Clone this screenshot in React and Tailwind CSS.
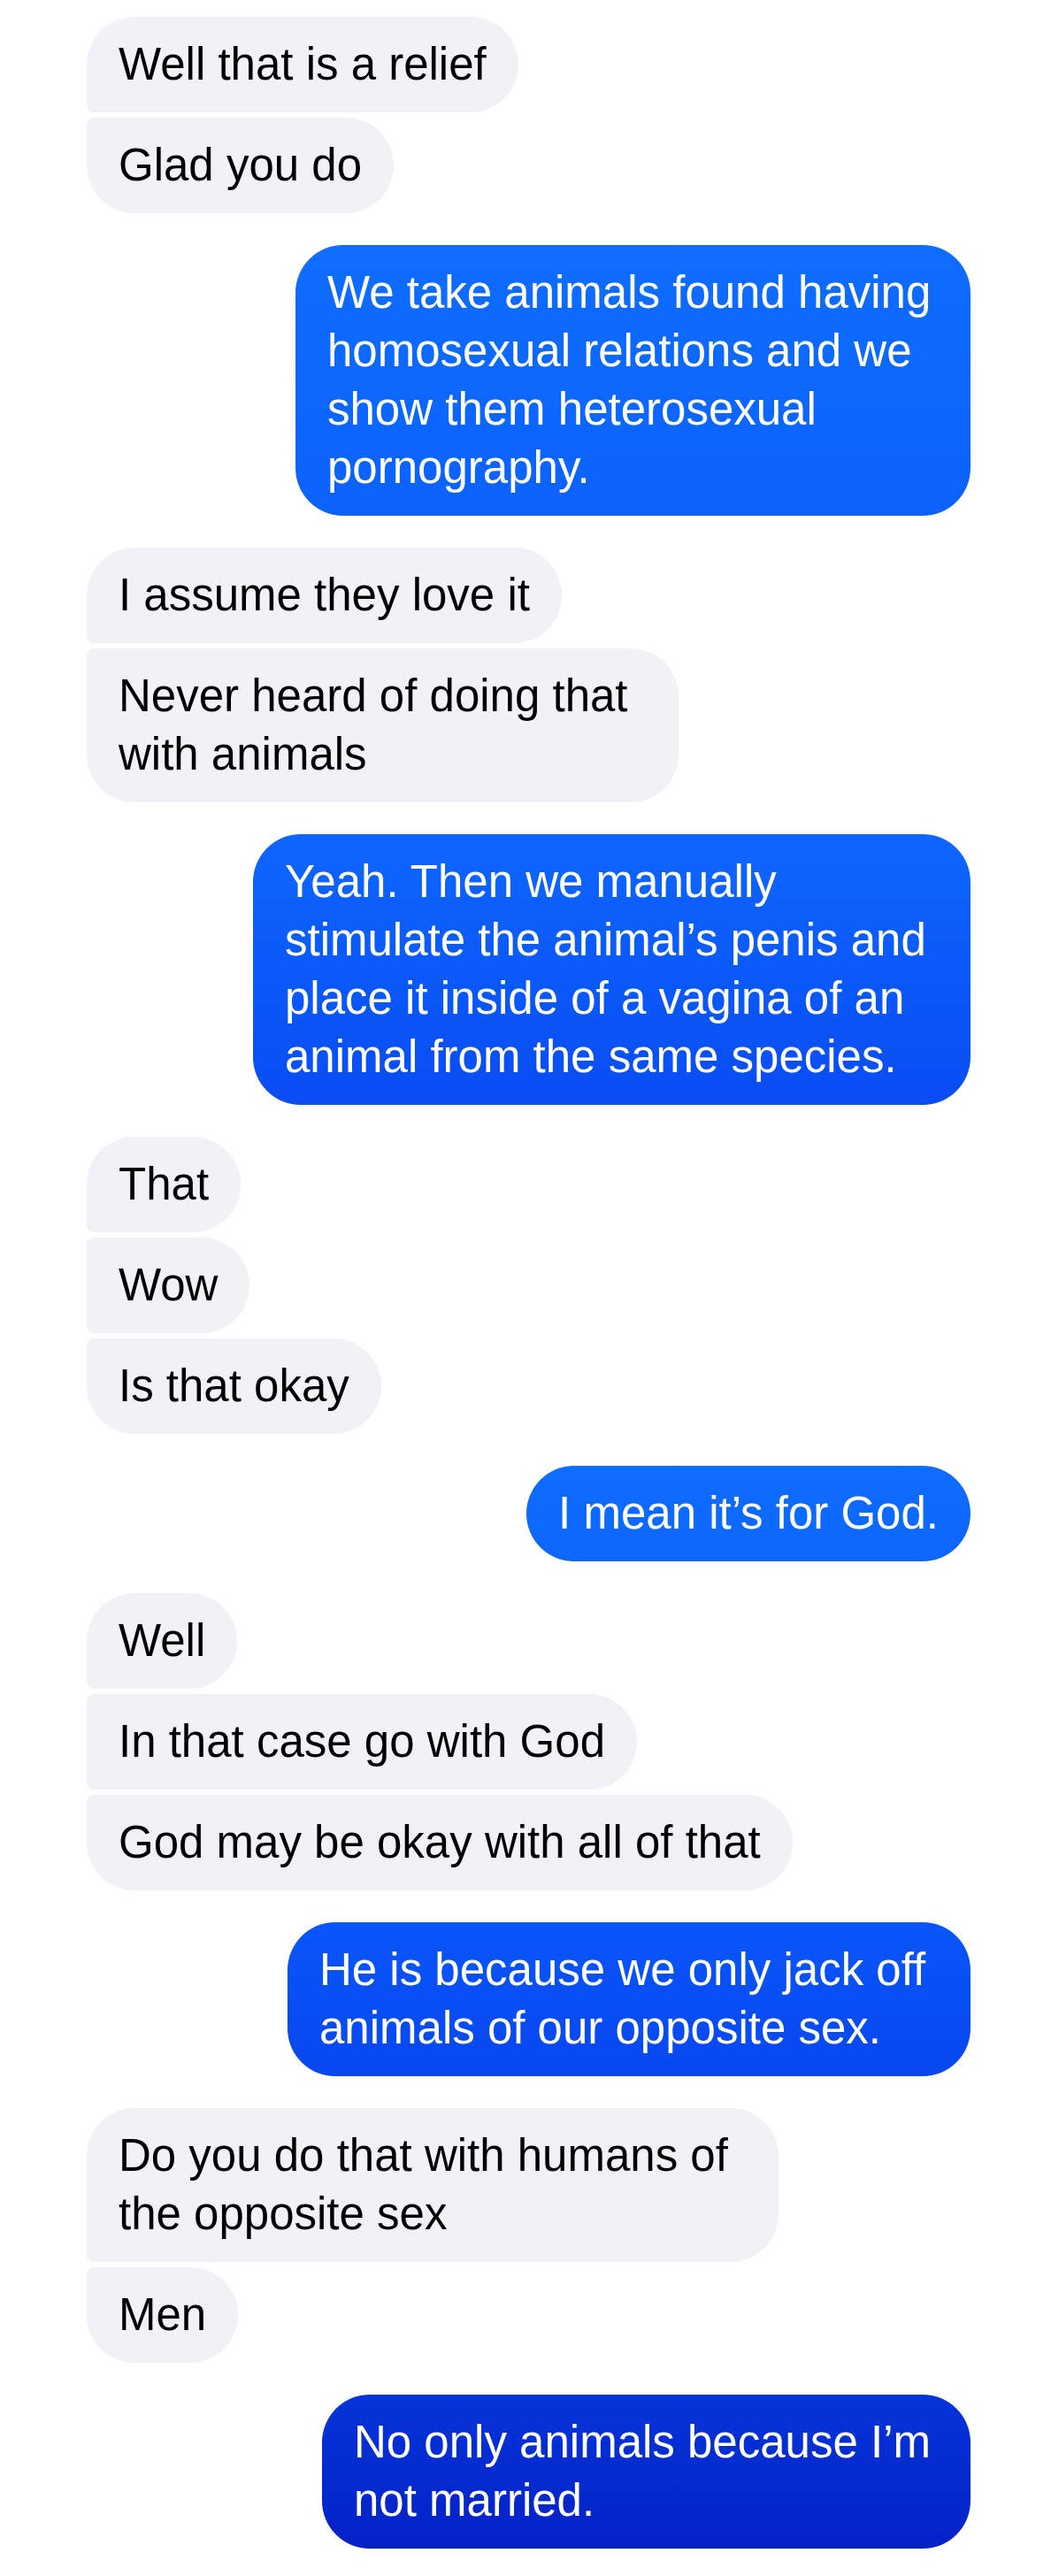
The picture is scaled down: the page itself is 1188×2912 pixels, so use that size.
import React from 'react';

// conversation, top to bottom; each group is a run of bubbles from one side.
// multi-line bubbles keep the wrap width they had in the app, hence the fixed w-[..]
const groups = [
    { side: 'them', items: [{ lines: ['Well that is a relief'] }, { lines: ['Glad you do'] }] },
    {
        side: 'me',
        grad: 'from-[#0f6dff] to-[#0c62fc]',
        items: [{ w: 'w-[763px]', lines: ['We take animals found having', 'homosexual relations and we', 'show them heterosexual', 'pornography.'] }],
    },
    {
        side: 'them',
        items: [{ lines: ['I assume they love it'] }, { w: 'w-[669px]', lines: ['Never heard of doing that', 'with animals'] }],
    },
    {
        side: 'me',
        grad: 'from-[#0f66ff] to-[#0a4cf2]',
        items: [{ w: 'w-[811px]', lines: ['Yeah. Then we manually', 'stimulate the animal\u2019s penis and', 'place it inside of a vagina of an', 'animal from the same species.'] }],
    },
    { side: 'them', items: [{ lines: ['That'] }, { lines: ['Wow'] }, { lines: ['Is that okay'] }] },
    { side: 'me', grad: 'from-[#0f6dff] to-[#0d66fd]', items: [{ lines: ['I mean it\u2019s for God.'] }] },
    {
        side: 'them',
        items: [{ lines: ['Well'] }, { lines: ['In that case go with God'] }, { lines: ['God may be okay with all of that'] }],
    },
    {
        side: 'me',
        grad: 'from-[#0a56f8] to-[#0847ee]',
        items: [{ w: 'w-[772px]', lines: ['He is because we only jack off', 'animals of our opposite sex.'] }],
    },
    {
        side: 'them',
        items: [{ w: 'w-[782px]', lines: ['Do you do that with humans of', 'the opposite sex'] }, { lines: ['Men'] }],
    },
    {
        side: 'me',
        grad: 'from-[#0534da] to-[#0421c6]',
        items: [{ w: 'w-[733px]', lines: ['No only animals because I\u2019m', 'not married.'] }],
    },
];

const Text = ({ lines }) => (
    <>
        {lines.map((l, i) => (
            <React.Fragment key={i}>
                {i > 0 && <br />}
                {l}
            </React.Fragment>
        ))}
    </>
);

const TheirBubble = ({ item, first, last }) => {
    // corners on the left side tighten where bubbles of a group touch
    const tl = first ? 'rounded-tl-[54px]' : 'rounded-tl-[8px]';
    const bl = last ? 'rounded-bl-[54px]' : 'rounded-bl-[8px]';
    return (
        <div className={`self-start bg-[#f1f2f6] text-black px-[36px] py-[21px] whitespace-nowrap rounded-r-[54px] ${tl} ${bl} ${item.w || ''}`}>
            <Text lines={item.lines} />
        </div>
    );
};

const MyBubble = ({ item, grad }) => (
    <div className={`self-end bg-linear-to-b ${grad} text-white px-[36px] py-[21px] whitespace-nowrap rounded-[54px] ${item.w || ''}`}>
        <Text lines={item.lines} />
    </div>
);

export default function App() {
    return (
        <div
            className="w-[1188px] min-h-[2912px] bg-white pt-[19px] pl-[98px] pr-[91px] text-[51px] leading-[66px]"
            style={{ fontFamily: '"Liberation Sans", Arial, sans-serif' }}
        >
            <div className="flex flex-col gap-[36px]">
                {groups.map((g, gi) => (
                    <div key={gi} className="flex flex-col gap-[6px]">
                        {g.items.map((item, i) =>
                            g.side === 'them' ? (
                                <TheirBubble
                                    key={i}
                                    item={item}
                                    first={i === 0}
                                    last={i === g.items.length - 1}
                                />
                            ) : (
                                <MyBubble key={i} item={item} grad={g.grad} />
                            )
                        )}
                    </div>
                ))}
            </div>
        </div>
    );
}
